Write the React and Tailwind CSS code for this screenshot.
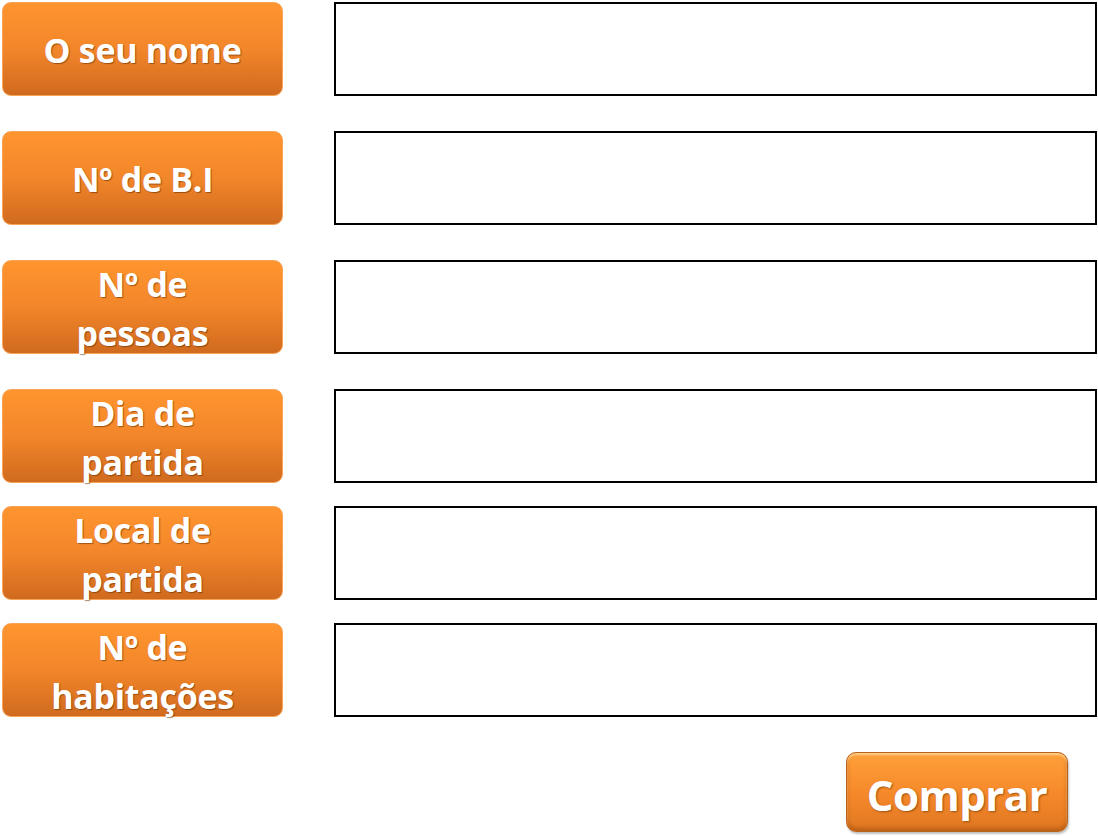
const rows = [
  { label: ['O seu nome'], mt: 'mt-0' },
  { label: ['Nº de B.I'], mt: 'mt-[35px]' },
  { label: ['Nº de', 'pessoas'], mt: 'mt-[35px]' },
  { label: ['Dia de', 'partida'], mt: 'mt-[35px]' },
  { label: ['Local de', 'partida'], mt: 'mt-[23px]' },
  { label: ['Nº de', 'habitações'], mt: 'mt-[23px]' },
];

function Label({ lines }) {
  return (
    <div className="w-[281px] h-[94px] pt-[3px] rounded-[9px] border border-[#f7a458] bg-gradient-to-b from-[#ff952f] via-[#f2862a] to-[#d06a1e] flex flex-col items-center justify-center text-white font-bold text-[34px] leading-[49px] tracking-[-0.3px] [text-shadow:1px_1px_1px_rgba(90,40,0,0.55)]">
      {lines.map((l, i) => (
        <span key={i} className="whitespace-nowrap">
          {l}
        </span>
      ))}
    </div>
  );
}

export default function App() {
  return (
    <div
      className="w-[1098px] h-[836px] bg-white relative pl-[2px] pt-[2px]"
      style={{ fontFamily: '"Open Sans", Lato, sans-serif' }}
    >
      {rows.map((row, i) => (
        <div key={i} className={`flex gap-[51px] ${row.mt}`}>
          <Label lines={row.label} />
          <input
            type="text"
            className="w-[763px] h-[94px] border-2 border-black bg-white outline-none"
          />
        </div>
      ))}
      <div className="flex justify-end pr-[30px] mt-[35px]">
        <button className="w-[222px] h-[80px] pt-[5px] rounded-[10px] border border-[#b8621c] bg-gradient-to-b from-[#ffa03a] via-[#f68a2a] to-[#e07722] shadow-[inset_0_2px_2px_rgba(255,220,160,0.8),inset_0_-3px_4px_rgba(150,70,10,0.5),1px_2px_2px_rgba(0,0,0,0.25)] text-white font-bold text-[42px] leading-none tracking-[-0.5px] [text-shadow:1px_1px_2px_rgba(90,40,0,0.55)]">
          Comprar
        </button>
      </div>
    </div>
  );
}
